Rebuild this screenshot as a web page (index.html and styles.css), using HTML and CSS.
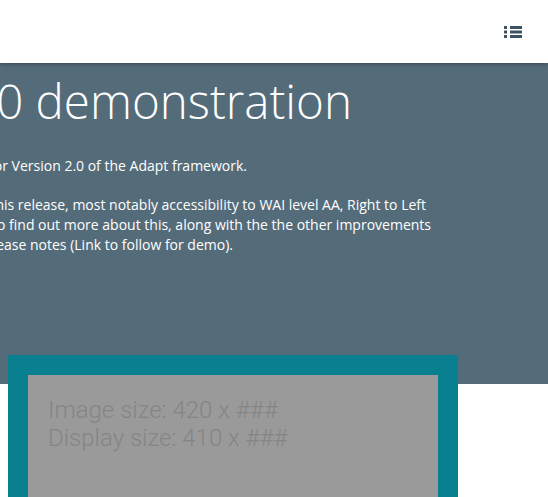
FILE: index.html
```html
<!DOCTYPE html>
<html>
<head>
<meta charset="utf-8">
<link rel="stylesheet" href="styles.css">
</head>
<body>
<header class="nav">
  <button class="nav-btn" aria-label="Menu">
    <svg width="18" height="14" viewBox="0 0 18 14">
      <rect x="0" y="1" width="3" height="3" fill="#3e5261"/>
      <rect x="0" y="5.5" width="3" height="3" fill="#3e5261"/>
      <rect x="0" y="10" width="3" height="3" fill="#3e5261"/>
      <rect x="6" y="1" width="12" height="3" fill="#3e5261"/>
      <rect x="6" y="5.5" width="12" height="3" fill="#3e5261"/>
      <rect x="6" y="10" width="12" height="3" fill="#3e5261"/>
    </svg>
  </button>
</header>
<main class="page">
  <section class="hero">
    <h1 class="line title"><span>Adapt v2.0 demonstration</span></h1>
    <div class="body">
      <p class="line l1"><span>This is a demonstration course for Version 2.0 of the Adapt framework.</span></p>
      <p class="line l2 gap"><span>There are many new features in this release, most notably accessibility to WAI level AA, Right to Left</span></p>
      <p class="line l3"><span>language support and more. To find out more about this, along with the the other improvements</span></p>
      <p class="line l4"><span>please see the release notes (Link to follow for demo).</span></p>
    </div>
  </section>
  <section class="graphic">
    <div class="frame">
      <div class="placeholder">
        <p>Image size: 420 x ###</p>
        <p>Display size: 410 x ###</p>
      </div>
    </div>
  </section>
</main>
</body>
</html>
```
FILE: styles.css
```css
html, body {
  margin: 0;
  padding: 0;
  background: #ffffff;
  overflow: hidden;
}
body {
  font-family: "Open Sans", sans-serif;
  width: 548px;
  height: 497px;
}
.nav {
  height: 63px;
  background: #ffffff;
  display: flex;
  justify-content: flex-end;
  align-items: flex-start;
  position: relative;
  z-index: 2;
  box-shadow: 0 1px 4px rgba(0, 0, 0, 0.35);
}
.nav-btn {
  border: 0;
  background: none;
  padding: 0;
  margin: 25px 26px 0 0;
  width: 18px;
  height: 14px;
  display: block;
}
.nav-btn svg { display: block; }
.page { position: relative; }
.hero {
  background: #546b79;
  color: #ffffff;
  height: 321px;
  padding-top: 9px;
  box-sizing: border-box;
}
.line {
  margin: 0;
  display: flex;
  justify-content: flex-end;
  overflow: hidden;
  white-space: nowrap;
}
.line span { flex: none; }
.title {
  font-weight: 300;
  font-size: 47.5px;
  line-height: 58px;
  width: 352px;
}
.body {
  margin-top: 26px;
  font-size: 14px;
  line-height: 20px;
}
.l1 { width: 247px; }
.l2 { width: 426px; }
.l3 { width: 431px; }
.l4 { width: 233px; }
.gap { margin-top: 19px; }
.graphic {
  margin-top: -29px;
  padding-left: 8px;
}
.frame {
  width: 450px;
  background: #088090;
  padding: 20px 20px 0;
  box-sizing: border-box;
}
.placeholder {
  background: #9a9a9a;
  height: 200px;
  padding: 21px 20px 0;
  box-sizing: border-box;
  color: #858585;
  font-family: Roboto, "Liberation Sans", sans-serif;
  font-weight: 300;
  font-size: 24px;
  line-height: 28px;
}
.placeholder p { margin: 0; }
```
